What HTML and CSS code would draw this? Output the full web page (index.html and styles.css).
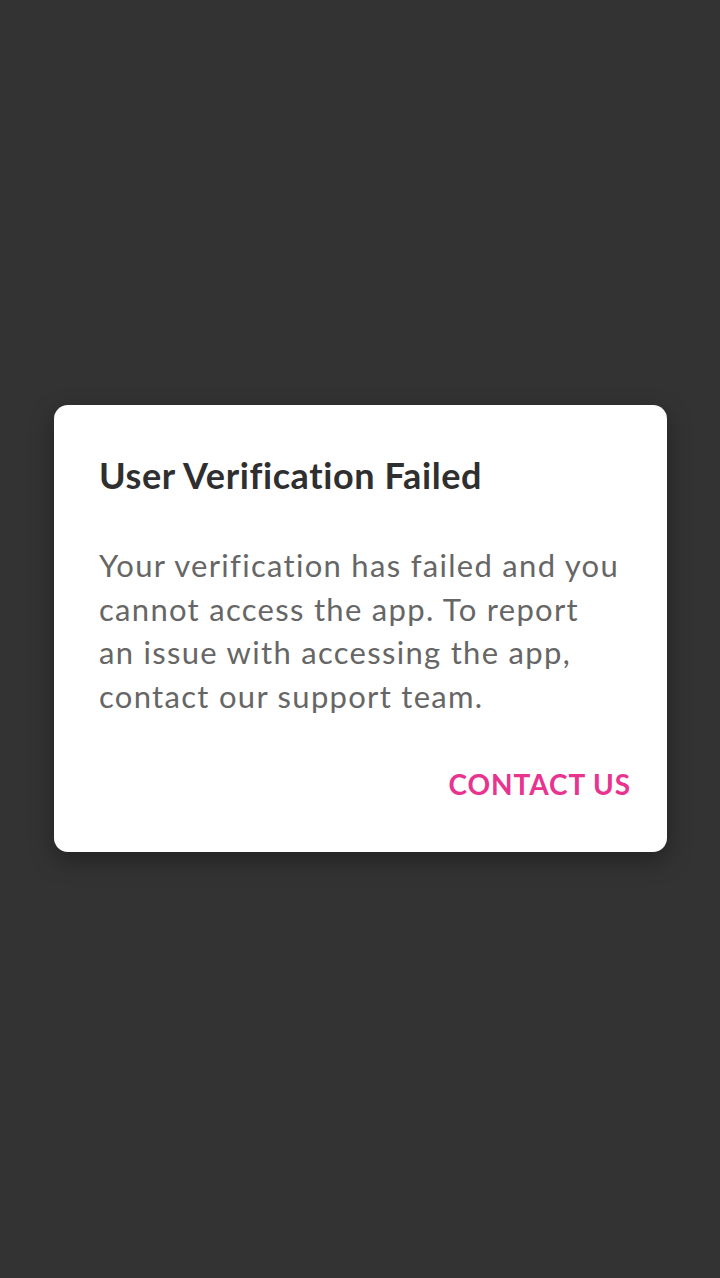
FILE: index.html
```html
<!DOCTYPE html>
<html>
<head>
<meta charset="utf-8">
<link rel="stylesheet" href="styles.css">
</head>
<body>
<div class="screen">
  <div class="dialog">
    <h1 class="title">User Verification Failed</h1>
    <p class="message">Your verification has failed and you cannot access the app. To report an issue with accessing the app, contact our support team.</p>
    <div class="actions">
      <span class="action">CONTACT US</span>
    </div>
  </div>
</div>
</body>
</html>
```
FILE: styles.css
```css
html, body {
  margin: 0;
  padding: 0;
  background: #333333;
}
.screen {
  width: 720px;
  height: 1278px;
  display: flex;
  flex-direction: column;
  align-items: center;
  padding-top: 405px;
  box-sizing: border-box;
  font-family: Lato, "Open Sans", sans-serif;
  font-variant-ligatures: none;
}
.dialog {
  width: 613px;
  height: 447px;
  box-sizing: border-box;
  background: #ffffff;
  border-radius: 14px;
  box-shadow: 0 8px 24px rgba(0,0,0,0.35);
  padding: 48px 36px 0 45px;
  margin-left: 1px;
}
.title {
  margin: 0;
  font-size: 36px;
  font-weight: 700;
  color: #2f2f2f;
  line-height: 44px;
  letter-spacing: 0.6px;
}
.message {
  width: 521px;
  margin: 47px 0 0 0;
  font-size: 31px;
  line-height: 43.5px;
  color: #666666;
  letter-spacing: 1.3px;
}
.actions {
  display: flex;
  justify-content: flex-end;
  margin-top: 49px;
}
.action {
  font-size: 28px;
  font-weight: 700;
  color: #e8338f;
  line-height: 34px;
  letter-spacing: 0.9px;
}
```
